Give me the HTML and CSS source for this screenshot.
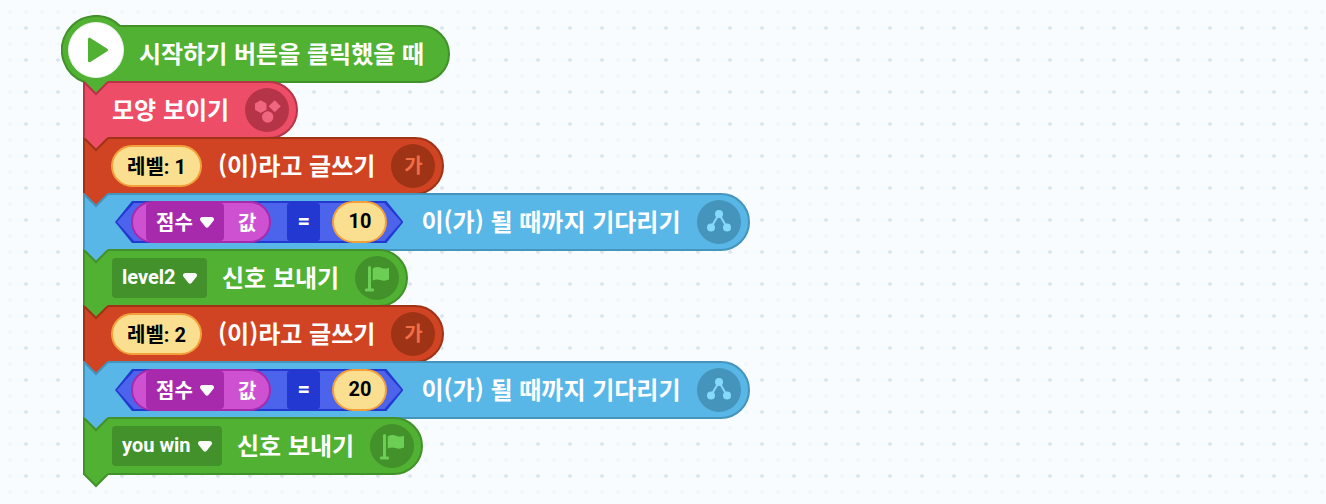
FILE: index.html
```html
<!DOCTYPE html>
<html lang="ko">
<head>
<meta charset="utf-8">
<title>블록 조립소</title>
<link rel="stylesheet" href="styles.css">
</head>
<body>
<svg class="defs" aria-hidden="true">
  <symbol id="notch" viewBox="0 0 28 16">
    <path class="notch-fill" d="M1 0V1L13 13L25 1V0Z"/>
    <path class="notch-line" d="M1 1L13 13L25 1"/>
  </symbol>
  <symbol id="arrow" viewBox="0 0 14 11">
    <path d="M2.500 0H11.500C13.900 0 14.700 2.200 13.300 3.900L8.700 9.800Q7 11.600 5.300 9.800L.7 3.900C-.7 2.200 .1 0 2.500 0Z"/>
  </symbol>
  <symbol id="flag" viewBox="0 0 44 44">
    <rect x="13" y="10" width="3" height="24" rx="1.5"/>
    <rect x="10" y="32.500" width="9" height="3" rx="1"/>
    <path d="M17.700 12.500Q22 10 26.500 12Q30 13.300 34 11.700V23.500Q29.500 25.500 25.500 24Q21.500 22.800 17.700 24.500Z"/>
  </symbol>
  <symbol id="flow" viewBox="0 0 44 44">
    <path class="flow-line" d="M14 27.500L22 14L30 27.500"/>
    <circle cx="22" cy="14" r="4"/><circle cx="14" cy="27.500" r="4"/><circle cx="30" cy="27.500" r="4"/>
  </symbol>
  <symbol id="shapes" viewBox="0 0 44 44">
    <path d="M15.700 12.300L21.500 15.500V21.700L15.700 25L10 21.700V15.500Z"/>
    <path d="M29.700 12.200L35.800 18.200L29.700 24.300L23.600 18.200Z"/>
    <circle cx="22.700" cy="29" r="5.700"/>
  </symbol>
</svg>

<main class="workspace">
  <div class="block start green">
    <svg class="play" viewBox="0 0 70 70" role="img" aria-label="시작">
      <circle class="play-body" cx="35" cy="35" r="34"/>
      <path class="play-line" d="M59 11A34 34 0 1 0 23.500 67"/>
      <circle class="play-disc" cx="35" cy="35" r="27.500"/>
      <path class="play-mark" d="M28.500 24.200V45.800L45.500 35Z"/>
    </svg>
    <span class="text">시작하기 버튼을 클릭했을 때</span>
  </div>

  <div class="block pink after-green">
    <svg class="notch" aria-hidden="true"><use href="#notch"/></svg>
    <span class="text">모양 보이기</span>
    <svg class="badge" aria-hidden="true"><use href="#shapes"/></svg>
  </div>

  <div class="block red after-pink">
    <svg class="notch" aria-hidden="true"><use href="#notch"/></svg>
    <input class="pill" type="text" value="레벨: 1" aria-label="글">
    <span class="text">(이)라고 글쓰기</span>
    <span class="badge">가</span>
  </div>

  <div class="block blue after-red">
    <svg class="notch" aria-hidden="true"><use href="#notch"/></svg>
    <div class="condition">
      <div class="variable">
        <span class="dropdown"><select aria-label="변수"><option>점수</option></select><svg class="arrow" aria-hidden="true"><use href="#arrow"/></svg></span>
        <span class="label">값</span>
      </div>
      <span class="operator">=</span>
      <input class="pill number" type="text" value="10" aria-label="비교 값">
    </div>
    <span class="text">이(가) 될 때까지 기다리기</span>
    <svg class="badge" aria-hidden="true"><use href="#flow"/></svg>
  </div>

  <div class="block green after-blue">
    <svg class="notch" aria-hidden="true"><use href="#notch"/></svg>
    <span class="dropdown signal"><select aria-label="신호"><option>level2</option></select><svg class="arrow" aria-hidden="true"><use href="#arrow"/></svg></span>
    <span class="text">신호 보내기</span>
    <svg class="badge" aria-hidden="true"><use href="#flag"/></svg>
  </div>

  <div class="block red after-green">
    <svg class="notch" aria-hidden="true"><use href="#notch"/></svg>
    <input class="pill" type="text" value="레벨: 2" aria-label="글">
    <span class="text">(이)라고 글쓰기</span>
    <span class="badge">가</span>
  </div>

  <div class="block blue after-red">
    <svg class="notch" aria-hidden="true"><use href="#notch"/></svg>
    <div class="condition">
      <div class="variable">
        <span class="dropdown"><select aria-label="변수"><option>점수</option></select><svg class="arrow" aria-hidden="true"><use href="#arrow"/></svg></span>
        <span class="label">값</span>
      </div>
      <span class="operator">=</span>
      <input class="pill number" type="text" value="20" aria-label="비교 값">
    </div>
    <span class="text">이(가) 될 때까지 기다리기</span>
    <svg class="badge" aria-hidden="true"><use href="#flow"/></svg>
  </div>

  <div class="block green after-blue">
    <svg class="notch" aria-hidden="true"><use href="#notch"/></svg>
    <span class="dropdown signal"><select aria-label="신호"><option>you win</option></select><svg class="arrow" aria-hidden="true"><use href="#arrow"/></svg></span>
    <span class="text">신호 보내기</span>
    <svg class="badge" aria-hidden="true"><use href="#flag"/></svg>
    <svg class="notch tail" aria-hidden="true"><use href="#notch"/></svg>
  </div>
</main>
</body>
</html>
```
FILE: styles.css
```css
:root {
  --green: #51b132;
  --pink: #ed4d66;
  --red: #d04423;
  --blue: #58b7e6;
}

* { box-sizing: border-box; }

body {
  margin: 0;
  min-height: 100vh;
  font-family: "Noto Sans CJK KR", sans-serif;
  font-weight: 700;
  color: #fff;
  background-color: #f9fcff;
  background-image:
    radial-gradient(circle at center, #dce8f1 2px, transparent 2px),
    radial-gradient(circle at center, #eef8fe 2px, transparent 2px);
  background-size: 32px 32px, 16px 16px;
  background-position: 10px 12px, 2px 4px;
}

.defs { display: none; }

.workspace {
  display: flex;
  flex-direction: column;
  align-items: flex-start;
  padding: 25px 0 30px 83px;
}

.block {
  position: relative;
  display: flex;
  align-items: center;
  gap: 15px;
  height: 58px;
  margin-bottom: -2px;
  padding: 0 7px 0 26px;
  border: 2px solid var(--dark);
  border-radius: 0 29px 29px 0;
  background: var(--fill);
  white-space: nowrap;
}

.green { --fill: var(--green); --dark: #42912a; --mark: #6dce55; }
.pink { --fill: var(--pink); --dark: #b63447; --mark: #f0667f; }
.red { --fill: var(--red); --dark: #9f3316; --mark: #ef6e45; }
.blue { --fill: var(--blue); --dark: #4594bb; --mark: #85dafb; }

.after-green { --above: var(--green); }
.after-pink { --above: var(--pink); }
.after-red { --above: var(--red); }
.after-blue { --above: var(--blue); }

.start { padding: 0 23px 0 53px; }

.text {
  margin: 0 1px;
  padding-bottom: 3px;
  font-size: 24px;
  line-height: 36px;
}

.notch {
  position: absolute;
  top: -2px;
  left: -2px;
  width: 28px;
  height: 16px;
}
.notch-fill { fill: var(--above); }
.notch-line { fill: none; stroke: var(--dark); stroke-width: 2; }
.tail { top: auto; bottom: -16px; --above: var(--fill); }

.play {
  position: absolute;
  top: -12px;
  left: -24px;
  width: 70px;
  height: 70px;
}
.play-body { fill: var(--fill); }
.play-line { fill: none; stroke: var(--dark); stroke-width: 2; }
.play-disc { fill: #fff; stroke: #e9f0e7; stroke-width: 1; }
.play-mark { fill: var(--fill); stroke: var(--fill); stroke-width: 3; stroke-linejoin: round; }

.badge {
  flex: none;
  display: grid;
  place-items: center;
  width: 44px;
  height: 44px;
  padding-bottom: 2px;
  border-radius: 50%;
  background: var(--dark);
  color: var(--mark);
  fill: var(--mark);
  font-size: 20px;
  line-height: 28px;
}
svg.badge { padding: 0; }
.flow-line { fill: none; stroke: var(--mark); stroke-width: 2; }

.pill {
  width: 91px;
  height: 42px;
  margin: 0;
  padding: 0 0 2px;
  border: 2px solid #f3a03b;
  border-radius: 21px;
  background: #fbdf90;
  color: #000;
  font: 700 20px Roboto, "Noto Sans CJK KR", sans-serif;
  text-align: center;
}
.number { width: 55px; }

.dropdown {
  display: flex;
  align-items: center;
  gap: 7px;
  height: 38px;
  padding: 0 10px;
  border-radius: 4px;
  background: #a82aac;
}
.dropdown select {
  appearance: none;
  margin: 0;
  padding: 0 0 2px;
  border: 0;
  background: transparent;
  color: inherit;
  font: inherit;
  font-size: 20px;
}
.arrow { width: 14px; height: 11px; fill: #fff; }
.signal {
  height: 40px;
  margin: 0 -1px 0 1px;
  background: var(--dark);
}
.signal select { font: 700 20px Roboto, "Noto Sans CJK KR", sans-serif; }

.condition {
  position: relative;
  display: flex;
  align-items: center;
  height: 42px;
  margin: 0 2px 0 4px;
  padding: 0 16px;
}
.condition::before,
.condition::after {
  content: "";
  position: absolute;
  inset: 0;
  background: #2238d0;
  clip-path: polygon(17px 0, calc(100% - 17px) 0, 100% 50%, calc(100% - 17px) 100%, 17px 100%, 0 50%);
}
.condition::after {
  inset: 2px;
  background: #4c63eb;
}
.condition > * { position: relative; z-index: 1; }

.variable {
  display: flex;
  align-items: center;
  gap: 14px;
  height: 42px;
  padding: 0 13px;
  border: 2px solid #a82aac;
  border-radius: 21px;
  background: #ce51d2;
  font-size: 20px;
}
.label { padding-bottom: 2px; }
.operator {
  width: 33px;
  height: 38px;
  margin: 0 12px 0 16px;
  border-radius: 3px;
  background: #2238d0;
  font: 700 22px/36px Roboto, sans-serif;
  text-align: center;
}
```
